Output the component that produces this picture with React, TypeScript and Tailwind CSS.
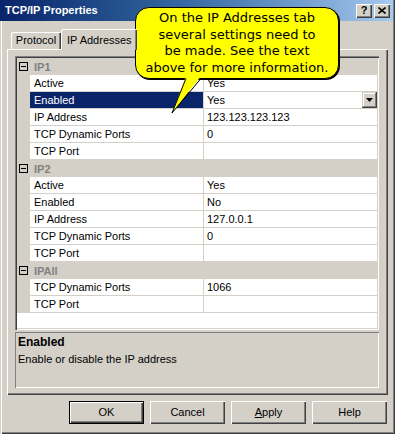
import React from "react";

type RowProps = { name: string; value?: string; selected?: boolean; dropdown?: boolean };

function Row({ name, value = "", selected, dropdown }: RowProps) {
  return (
    <div className="flex h-[17px]">
      <div className="w-[13px] shrink-0 bg-[#d4d0c8]" />
      <div
        className={
          selected
            ? "w-[174px] shrink-0 border-b border-r border-[#d4d0c8] bg-[#0a246a] pl-[4px] text-white leading-[16px]"
            : "w-[174px] shrink-0 border-b border-r border-[#d4d0c8] bg-white pl-[4px] leading-[16px]"
        }
      >
        {name}
      </div>
      <div className="flex flex-1 items-start border-b border-[#d4d0c8] bg-white pl-[3px] leading-[16px]">
        <span>{value}</span>
        {dropdown && (
          <div className="ml-auto flex h-[16px] w-[15px] items-center justify-center bg-[#d4d0c8] shadow-[inset_-1px_-1px_0_#404040,inset_1px_1px_0_#d4d0c8,inset_-2px_-2px_0_#808080,inset_2px_2px_0_#fff]">
            <svg width="7" height="4" viewBox="0 0 7 4">
              <polygon points="0,0 7,0 3.5,4" fill="#000" />
            </svg>
          </div>
        )}
      </div>
    </div>
  );
}

function Category({ name }: { name: string }) {
  return (
    <div className="flex h-[17px] items-center bg-[#d4d0c8]">
      <div className="flex w-[13px] shrink-0 justify-center">
        <div className="flex h-[9px] w-[9px] items-center justify-center border border-black bg-[#d4d0c8]">
          <div className="h-px w-[5px] bg-black" />
        </div>
      </div>
      <div className="pl-[4px] font-bold text-[#808080] leading-[16px]">{name}</div>
    </div>
  );
}

function Button({ children, def }: { children: React.ReactNode; def?: boolean }) {
  return (
    <div
      className={
        def
          ? "flex h-[23px] w-[75px] items-center justify-center border border-black bg-[#d4d0c8] shadow-[inset_1px_1px_0_#fff,inset_-1px_-1px_0_#404040,inset_-2px_-2px_0_#808080]"
          : "flex h-[23px] w-[75px] items-center justify-center bg-[#d4d0c8] shadow-[inset_1px_1px_0_#fff,inset_-1px_-1px_0_#404040,inset_-2px_-2px_0_#808080]"
      }
    >
      {children}
    </div>
  );
}

export default function App() {
  return (
    <div className="relative h-[434px] w-[395px] overflow-hidden bg-[#d4d0c8] font-['Liberation_Sans',Arial,sans-serif] text-[11px] text-black shadow-[inset_2px_0_0_#d4d0c8,inset_-1px_-1px_0_#404040,inset_-2px_-2px_0_#808080]">
      <div className="absolute left-[1px] top-0 h-full w-px bg-white" />
      {/* Title bar */}
      <div className="relative flex h-[21px] w-[393px] items-center bg-linear-to-r from-[#0a246a] via-[#3a6ea5] to-[#a6caf0] pl-[5px] pr-[3px]">
        <span className="font-bold text-white text-[11px]">TCP/IP Properties</span>
        <div className="ml-auto flex gap-[2px]">
          <div className="flex h-[14px] w-[16px] items-center justify-center bg-[#d4d0c8] text-[11px] font-bold leading-none shadow-[inset_1px_1px_0_#fff,inset_-1px_-1px_0_#404040,inset_-2px_-2px_0_#808080]">
            ?
          </div>
          <div className="flex h-[14px] w-[16px] items-center justify-center bg-[#d4d0c8] shadow-[inset_1px_1px_0_#fff,inset_-1px_-1px_0_#404040,inset_-2px_-2px_0_#808080]">
            <svg width="8" height="7" viewBox="0 0 8 7">
              <path d="M0.5 0.5 L7.5 6.5 M7.5 0.5 L0.5 6.5" stroke="#000" strokeWidth="1.6" />
            </svg>
          </div>
        </div>
      </div>

      {/* Tabs */}
      <div className="mt-[8px] flex h-[20px] items-end pl-[11px]">
        <div className="flex h-[17px] w-[50px] items-center justify-center rounded-tl-[2px] bg-[#d4d0c8] shadow-[inset_1px_1px_0_#fff,inset_-1px_0_0_#404040,inset_-2px_0_0_#808080]">
          Protocol
        </div>
        <div className="relative z-10 -mb-[1px] flex h-[21px] w-[76px] items-start justify-start rounded-tl-[2px] bg-[#d4d0c8] pl-[6px] pt-[3px] shadow-[inset_1px_1px_0_#fff,inset_-1px_0_0_#404040,inset_-2px_0_0_#808080]">
          IP Addresses
        </div>
      </div>

      {/* Panel */}
      <div className="ml-[7px] h-[346px] w-[381px] pl-[8px] pt-[7px] shadow-[inset_1px_1px_0_#fff,inset_-1px_-1px_0_#404040,inset_-2px_-2px_0_#808080]">
        {/* Grid */}
        <div className="h-[274px] w-[364px] bg-white p-[2px] shadow-[inset_1px_1px_0_#808080,inset_2px_2px_0_#404040,inset_-1px_-1px_0_#fff,inset_-2px_-2px_0_#d4d0c8]">
          <Category name="IP1" />
          <Row name="Active" value="Yes" />
          <Row name="Enabled" value="Yes" selected dropdown />
          <Row name="IP Address" value="123.123.123.123" />
          <Row name="TCP Dynamic Ports" value="0" />
          <Row name="TCP Port" />
          <Category name="IP2" />
          <Row name="Active" value="Yes" />
          <Row name="Enabled" value="No" />
          <Row name="IP Address" value="127.0.0.1" />
          <Row name="TCP Dynamic Ports" value="0" />
          <Row name="TCP Port" />
          <Category name="IPAll" />
          <Row name="TCP Dynamic Ports" value="1066" />
          <Row name="TCP Port" />
        </div>
        {/* Description */}
        <div className="mt-[2px] h-[56px] w-[364px] px-[3px] pt-[3px] shadow-[inset_1px_1px_0_#808080,inset_-1px_-1px_0_#fff]">
          <div className="font-bold text-[12px] leading-[15px]">Enabled</div>
          <div className="mt-[2px] leading-[14px]">Enable or disable the IP address</div>
        </div>
      </div>

      {/* Buttons */}
      <div className="mt-[6px] flex justify-end gap-[6px] pr-[8px]">
        <Button def>OK</Button>
        <Button>Cancel</Button>
        <Button>
          <span>
            <span className="underline">A</span>pply
          </span>
        </Button>
        <Button>Help</Button>
      </div>

      {/* Callout balloon */}
      <div className="absolute left-[135px] top-[7px] h-[72px] w-[204px] rounded-[14px] border border-black bg-[#ffff00] pt-[2px] text-center font-['DejaVu_Sans',Verdana,sans-serif] text-[13px] leading-[16.5px] text-black shadow-[1px_1px_0_#000]">
        <div>On the IP Addresses tab</div>
        <div>several settings need to</div>
        <div>be made. See the text</div>
        <div>above for more information.</div>
      </div>
      <svg className="pointer-events-none absolute left-[165px] top-[76px]" width="40" height="40" viewBox="0 0 40 40">
        <polygon points="21,0 7,37 36,0" fill="#ffff00" />
        <polyline points="21,2.5 7,37 36,2.5" fill="none" stroke="#000" strokeWidth="1" />
      </svg>
    </div>
  );
}
